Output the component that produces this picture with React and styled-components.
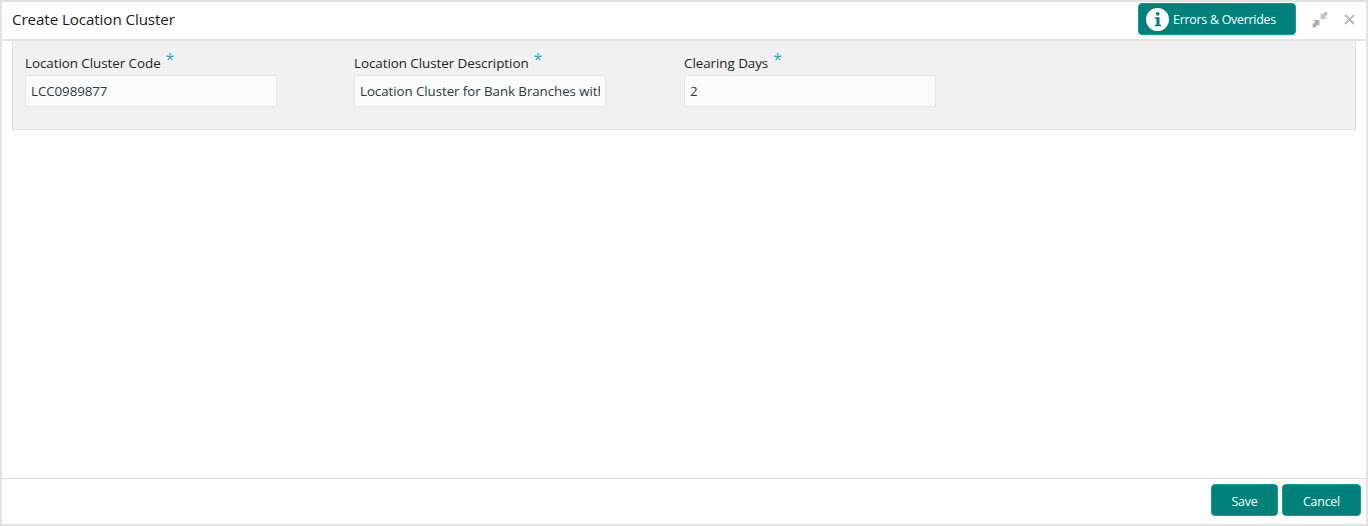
import React from 'react'
import styled, { createGlobalStyle } from 'styled-components'

const GlobalStyle = createGlobalStyle`
  html, body { margin: 0; padding: 0; background: #fff; }
  body { font-family: "Open Sans", "Noto Sans", sans-serif; }
  * { box-sizing: border-box; }
`

const Frame = styled.div`
  width: 1368px;
  height: 526px;
  border: 2px solid #e2e2e2;
  display: flex;
  flex-direction: column;
  background: #fff;
`

const Header = styled.header`
  height: 39px;
  flex: none;
  display: flex;
  align-items: center;
  padding: 0 11px 3px 10px;
  border-bottom: 2px solid #e2e5e5;
`

const Title = styled.h1`
  margin: 0;
  font-size: 15.2px;
  font-weight: 400;
  color: #1c1c1c;
  flex: 1;
  letter-spacing: -0.1px;
`

const ErrorsButton = styled.button`
  width: 158px;
  height: 32px;
  margin-right: 15px;
  padding: 0 0 0 7px;
  display: flex;
  align-items: center;
  gap: 4px;
  background: #00807a;
  border: 1px solid #00a396;
  border-radius: 4px;
  color: #fff;
  font: 400 12.4px "Open Sans", sans-serif;
  letter-spacing: -0.25px;
`

const WindowIcon = styled.svg`
  display: block;
  flex: none;
  margin-left: ${p => p.$gap || 0}px;
`

const Body = styled.main`
  flex: 1;
  padding: 0 10px;
`

const Panel = styled.section`
  height: 89px;
  background: #f1f1f1;
  border: 1px solid #e0e0e0;
  border-top: none;
  padding: 10px 12px 0;
  display: grid;
  grid-template-columns: 329px 330px 252px;
`

const Field = styled.div`
  width: 252px;
`

const Label = styled.label`
  display: flex;
  height: 24px;
  align-items: center;
  font-size: 13.4px;
  color: #232323;
  letter-spacing: -0.05px;
  white-space: nowrap;
`

const Star = styled.span`
  color: #1aa9dc;
  font-size: 16px;
  line-height: 1;
  margin-left: 5px;
  transform: translateY(-4px);
`

const Input = styled.input`
  display: block;
  width: 100%;
  height: 32px;
  padding: 0 5px;
  background: #fbfbfb;
  border: 1px solid #e6e6e6;
  border-radius: 2px;
  outline: none;
  font: 400 13.3px "Open Sans", sans-serif;
  letter-spacing: -0.05px;
  color: #2c3a40;
`

const Footer = styled.footer`
  height: 46px;
  flex: none;
  border-top: 1px solid #dcdcdc;
  display: flex;
  justify-content: flex-end;
  align-items: flex-start;
  gap: 4px;
  padding: 5px 5px 0 0;
`

const ActionButton = styled.button`
  width: ${p => p.$width}px;
  height: 32px;
  padding: 2px 0 0;
  background: #00807a;
  border: 1px solid #00a396;
  border-radius: 4px;
  color: #fff;
  font: 400 12.4px "Open Sans", sans-serif;
  letter-spacing: -0.2px;
`

const InfoIcon = () => (
  <svg width="23" height="23" viewBox="0 0 23 23">
    <circle cx="11.5" cy="11.5" r="11.5" fill="#fff" />
    <circle cx="11.7" cy="5.8" r="1.9" fill="#00807a" />
    <path d="M8.8 9.2h4.7v7.6h1.6v1.5H8.8v-1.5h1.6v-6.1H8.8z" fill="#00807a" />
  </svg>
)

const CollapseIcon = () => (
  <WindowIcon width="18" height="18" viewBox="0 0 18 18">
    <path d="M17 3.5 14.6 1l-3.4 3.6L9.6 3v6h6l-1.7-1.7z" fill="#c4c4c4" />
    <path d="M1 15.5 3.4 18l3.4-3.6L8.4 16v-6h-6l1.7 1.7z" fill="#b8aca0" />
  </WindowIcon>
)

const CloseIcon = () => (
  <WindowIcon $gap={15} width="11" height="11" viewBox="0 0 11 11">
    <path d="M1 1l9 9M10 1l-9 9" stroke="#bdbdbd" strokeWidth="2.2" />
  </WindowIcon>
)

const fields = [
  { label: 'Location Cluster Code', value: 'LCC0989877' },
  { label: 'Location Cluster Description', value: 'Location Cluster for Bank Branches within the region' },
  { label: 'Clearing Days', value: '2' },
]

const App = () => {
  return (
    <Frame>
      <GlobalStyle />
      <Header>
        <Title>Create Location Cluster</Title>
        <ErrorsButton><InfoIcon />Errors &amp; Overrides</ErrorsButton>
        <CollapseIcon />
        <CloseIcon />
      </Header>
      <Body>
        <Panel>
          {fields.map(f => (
            <Field key={f.label}>
              <Label>{f.label}<Star>*</Star></Label>
              <Input readOnly value={f.value} />
            </Field>
          ))}
        </Panel>
      </Body>
      <Footer>
        <ActionButton $width={67}>Save</ActionButton>
        <ActionButton $width={79}>Cancel</ActionButton>
      </Footer>
    </Frame>
  )
}

export default App
